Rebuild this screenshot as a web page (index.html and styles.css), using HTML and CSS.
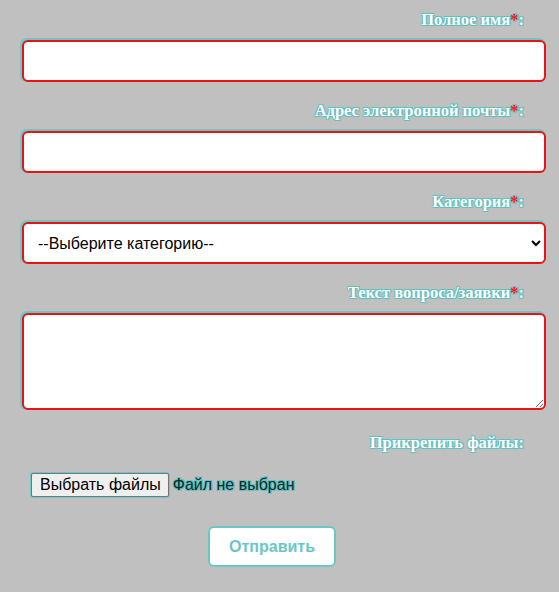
FILE: index.html
```html
<!DOCTYPE html>
<html lang="ru">
<head>
<meta charset="utf-8">
<link rel="stylesheet" href="styles.css">
</head>
<body>
<form class="form">
  <div class="group">
    <label class="label">Полное имя<span class="req">*</span>:</label>
    <input class="field" type="text">
  </div>
  <div class="group">
    <label class="label">Адрес электронной почты<span class="req">*</span>:</label>
    <input class="field" type="email">
  </div>
  <div class="group">
    <label class="label">Категория<span class="req">*</span>:</label>
    <select class="field select">
      <option>--Выберите категорию--</option>
    </select>
  </div>
  <div class="group text-group">
    <label class="label">Текст вопроса/заявки<span class="req">*</span>:</label>
    <textarea class="field area"></textarea>
  </div>
  <div class="group files">
    <label class="label">Прикрепить файлы:</label>
    <div class="file">
      <label class="file-btn">Выбрать файлы<input class="file-input" type="file" multiple></label>
      <span class="file-name">Файл не выбран</span>
    </div>
  </div>
  <div class="actions">
    <button class="submit" type="button">Отправить</button>
  </div>
</form>
</body>
</html>
```
FILE: styles.css
```css
html, body {
  margin: 0;
  background: #c0c0c0;
}
.form {
  display: flex;
  flex-direction: column;
  padding: 11px 13px 0 22px;
}
.group {
  display: flex;
  flex-direction: column;
  gap: 11px;
  margin-bottom: 20px;
}
.label {
  align-self: flex-end;
  margin-right: 22px;
  font-family: "Liberation Serif", serif;
  font-weight: bold;
  font-size: 16.5px;
  line-height: 18px;
  color: #ffffff;
  text-shadow: 1px 1px 0 #62c0c0, -1px -1px 0 #62c0c0, 1px -1px 0 #62c0c0, -1px 1px 0 #62c0c0, 0 0 2px #62c0c0;
}
.req {
  color: #ff1a1a;
}
.field {
  display: block;
  box-sizing: border-box;
  width: 100%;
  height: 42px;
  margin: 0;
  border: 2px solid #ee1111;
  border-radius: 6px;
  background: #ffffff;
  box-shadow: -1px -1px 0 1px #6cc6c6;
  font-family: "Liberation Sans", Arial, sans-serif;
  font-size: 16px;
  color: #000;
  outline: none;
}
.select {
  padding: 0 8px 0 10px;
}
.area {
  height: 97px;
  resize: vertical;
}
.text-group {
  margin-bottom: 24px;
}
.files {
  gap: 21px;
  margin-bottom: 29px;
}
.file {
  display: flex;
  align-items: center;
  gap: 4px;
  margin-left: 9px;
  height: 24px;
  font-family: "Liberation Sans", Arial, sans-serif;
  font-size: 16px;
}
.file-btn {
  box-sizing: border-box;
  height: 24px;
  padding: 0 7px 0 8px;
  display: flex;
  align-items: center;
  background: #efefef;
  border: 1px solid #767676;
  border-radius: 2px;
  box-shadow: 0 0 0 1px #6cc6c6;
  color: #000;
}
.file-input {
  display: none;
}
.file-name {
  color: #0a2e2e;
  text-shadow: 1px 1px 0 #62c0c0, -1px -1px 0 #62c0c0, 1px -1px 0 #62c0c0, -1px 1px 0 #62c0c0;
}
.actions {
  display: flex;
  padding-left: 186px;
}
.submit {
  width: 128px;
  height: 41px;
  background: #ffffff;
  border: 2px solid #6cc6c6;
  border-radius: 6px;
  font-family: "Liberation Sans", Arial, sans-serif;
  font-weight: bold;
  font-size: 16px;
  color: #6cc6c6;
}
```
